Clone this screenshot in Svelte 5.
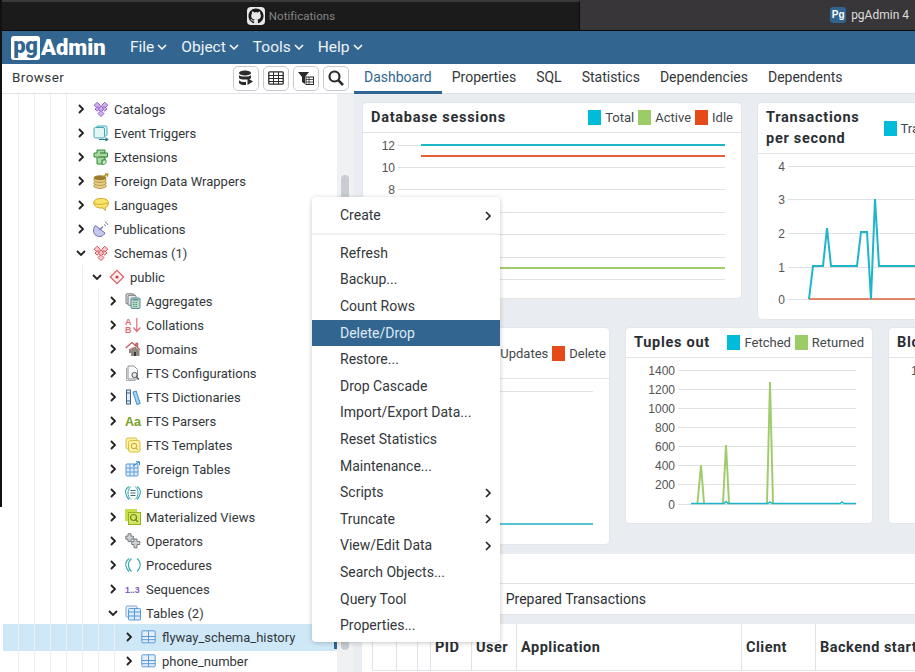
<script>
  const ICONS = {
    catalogs: `<g fill="#cdb0ec" stroke="#8b57c4" stroke-width=".9"><path d="M4.200 1.200l3 3-3 3-3-3z"/><path d="M11.800 1.200l3 3-3 3-3-3z"/><path d="M8 5l3 3-3 3-3-3z"/><path d="M8 9.600l3 3-3 3-3-3z"/><path d="M4.200 5.800l2.200 2.200-2.200 2.200L2 8z"/><path d="M11.800 5.800l2.200 2.200-2.200 2.200L9.600 8z"/></g>`,
    triggers: `<g fill="#e4f5f6" stroke="#3fa9b5" stroke-width="1"><rect x="3.500" y="1" width="10.500" height="10" rx="1.500"/><rect x="1" y="2.500" width="10.500" height="10.500" rx="1.500"/></g><path d="M6 14.500h8.500M12.500 12.700l2.300 1.800-2.300 1.500" fill="none" stroke="#2a7f8a" stroke-width="1.100"/>`,
    extensions: `<g stroke="#2f8a3a" stroke-width="1" fill="#a8d8a0"><path d="M4 1h8v3h2.500v4H12v3H9v4H4V8H1V4h3z"/></g><path d="M5 8h7M7 4h5" stroke="#1f6a2a" stroke-width="1"/><path d="M10 11h3v3l-2 1.500H9z" fill="#d8f0d0" stroke="#2f8a3a" stroke-width=".8"/>`,
    fdw: `<g fill="#e8cf84" stroke="#a48a3a" stroke-width=".8"><ellipse cx="7" cy="13" rx="6.300" ry="2.400"/><ellipse cx="7" cy="10" rx="6.300" ry="2.400"/></g><ellipse cx="7" cy="7" rx="6.300" ry="2.400" fill="#e8cf84" stroke="#a48a3a" stroke-width=".8"/><ellipse cx="7" cy="4.800" rx="6.300" ry="2.500" fill="#9a7c2a"/><path d="M9 4l5-2.500M12 .8l3 .2-1 2.800" fill="none" stroke="#b58e2a" stroke-width="1.200"/>`,
    languages: `<path d="M.8 5.500c0-2.500 3-4 7-4s7.500 1 7.500 4-1 4.500-3 5v3l-2.300-2.600C5 11.500.8 9.500.8 5.500z" fill="#fbe46b" stroke="#c9a722" stroke-width="1"/><path d="M1.200 6c2 1.800 10 2 14-.5" fill="none" stroke="#c9a722" stroke-width=".9"/>`,
    publications: `<path d="M2.500 4.500C-.5 8 0 12.500 3 14.500s7.500 1 9-2.500z" fill="#c6c8ea" stroke="#6d70b5" stroke-width="1"/><path d="M6.500 9l3.500-3.500" stroke="#6d70b5" stroke-width="1.300"/><path d="M11 3.500a2 2 0 0 1 1.500 1.500M12 1a5 5 0 0 1 3 3" fill="none" stroke="#6d70b5" stroke-width=".9"/>`,
    schemas: `<g fill="#f6c7c9" stroke="#cf4a50" stroke-width=".9"><path d="M4.200 1.200l3 3-3 3-3-3z"/><path d="M11.800 1.200l3 3-3 3-3-3z"/><path d="M8 5l3 3-3 3-3-3z"/><path d="M8 9.600l3 3-3 3-3-3z"/><path d="M4.200 5.800l2.200 2.200-2.200 2.200L2 8z"/><path d="M11.800 5.800l2.200 2.200-2.200 2.200L9.600 8z"/></g>`,
    public: `<path d="M8 1.300L14.700 8 8 14.700 1.300 8z" fill="#fdeeee" stroke="#d9575c" stroke-width="1.100"/><circle cx="8" cy="8" r="1.600" fill="#d33c43"/>`,
    aggregates: `<g fill="#e6e8ea" stroke="#666e76" stroke-width=".9"><rect x="1" y=".8" width="8" height="10" rx="1"/><rect x="3" y="2.300" width="8" height="10" rx="1"/></g><rect x="6" y="5" width="9" height="10.500" rx="1" fill="#b8dcc8" stroke="#4f7f8f" stroke-width=".9"/><path d="M7.500 6.800h6" stroke="#4f7f8f" stroke-width="1.200"/><path d="M8 9.500h1.500m1 0H12M8 11.500h1.500m1 0H12M8 13.500h1.500m1 0H12" stroke="#4f8f7f" stroke-width="1"/>`,
    collations: `<text x="0" y="7.500" font-family="Liberation Sans" font-weight="700" font-size="9" fill="#e26d78">A</text><text x="0" y="15.800" font-family="Liberation Sans" font-weight="700" font-size="9" fill="#e26d78">B</text><path d="M11.800 1v13M8.300 10.500l3.500 4 3.500-4" fill="none" stroke="#e26d78" stroke-width="1.200"/>`,
    domains: `<path d="M.7 7L7 1.500 11 5V2.500h1.500v4L15 9" fill="none" stroke="#c25a5a" stroke-width="1.300"/><path d="M4 8h3V12H4z" fill="#8a8077"/><path d="M7 7l3-1.500 4.500 4V15H6V9.500z" fill="#8f887f"/><path d="M9 11h2v4H9z" fill="#3a3a3a"/><path d="M5 7.500l2-1 1 .5-3 3z" fill="#d88"/>`,
    configs: `<path d="M3 1h6l3.500 3.500V14H3z" fill="#fff" stroke="#8a8f94" stroke-width="1"/><path d="M1.500 3v12.500h9" fill="none" stroke="#a8adb2" stroke-width="1"/><circle cx="9.500" cy="10" r="2.600" fill="#e8eaec" stroke="#4b5156" stroke-width="1"/><path d="M11.500 12l2.500 2.500" stroke="#4b5156" stroke-width="1.300"/>`,
    dicts: `<rect x="1.500" y="1" width="4" height="14" fill="#dfeefa" stroke="#3e5f80" stroke-width="1"/><path d="M1.500 4h4M1.500 12h4" stroke="#3e5f80"/><path d="M8 3l3.200-1 4 12.500-3.300 1z" fill="#a9d3f0" stroke="#3d8bc8" stroke-width="1"/>`,
    parsers: `<text x="0" y="12.500" font-family="Liberation Sans" font-weight="700" font-size="12.500" fill="#76a02a">Aa</text>`,
    templates: `<rect x="1" y="1" width="11" height="11" rx="2" fill="#fdf2a8" stroke="#d8c040" stroke-width="1"/><rect x="3.500" y="3.500" width="11.500" height="11.500" rx="2" fill="#fdf2a8" stroke="#d8c040" stroke-width="1"/><circle cx="9" cy="9" r="2.700" fill="none" stroke="#c9a830" stroke-width="1"/><path d="M11 11l2 2" stroke="#c9a830" stroke-width="1"/>`,
    foreign: `<rect x="1" y="3" width="12" height="12" rx="1" fill="#dcebfa" stroke="#5a9ad8" stroke-width="1"/><path d="M1 7h12M1 11h12M5 3v12M9 3v12" stroke="#5a9ad8" stroke-width=".9"/><path d="M8 5l6-4M11 .8h3.500V4" fill="none" stroke="#2f80c8" stroke-width="1"/>`,
    functions: `<path d="M4 1.500C1 3.500 0 6 .800 8.500 1 11 2.500 13 4 14.500M12 1.500c2.500 2 4 4.500 3.200 7-.3 2.500-1.700 4.500-3.200 6" fill="none" stroke="#35a7b3" stroke-width="1.100"/><path d="M6 1.500C3.500 3.500 3 6 3 8s.5 4.500 3 6.500M10 1.500c2.500 2 3 4.500 3 6.500s-.5 4.500-3 6.500" fill="none" stroke="#35a7b3" stroke-width="1"/><path d="M5.500 5.500h5M5.500 8h5M5.500 10.500h5" stroke="#3a6f7a" stroke-width="1"/>`,
    matviews: `<rect x="0" y="0" width="12" height="12" fill="#c8dc48"/><rect x="3.500" y="3.500" width="12" height="12" fill="#d4e468" stroke="#9ab020" stroke-width="1"/><circle cx="8.500" cy="8.500" r="3" fill="none" stroke="#6f8a10" stroke-width="1.200"/><path d="M10.500 10.500l2.500 2.500" stroke="#6f8a10" stroke-width="1.200"/>`,
    operators: `<g fill="#cfd2d6" stroke="#6a6f75" stroke-width=".9"><path d="M3 .8h3v2.400h2.400v3H6v2.400H3V6.200H.8v-3H3z"/><path d="M9 6h3v2.500h2.800v3H12v3.300H9v-3.300H6.700v-3H9z"/></g>`,
    procedures: `<path d="M4 1.500C1.500 3.500.500 6 .800 8.500 1 11 2.500 13 4 14.500M6.500 1.500C4 3.500 3.500 6 3.500 8s.5 4.500 3 6.500" fill="none" stroke="#35a7b3" stroke-width="1.100"/><path d="M12 1.500c2.500 2 3.500 4.500 3.200 7-.2 2.500-1.700 4.500-3.200 6" fill="none" stroke="#35a7b3" stroke-width="1.100"/>`,
    sequences: `<text x="0" y="12" font-family="Liberation Sans" font-weight="700" font-size="8.800" fill="#7e57c2">1..3</text>`,
    tables: `<rect x="1" y="1" width="11" height="11" rx="1" fill="#eaf2fb" stroke="#7aa7d8" stroke-width="1"/><rect x="3.500" y="3.500" width="12" height="11.500" rx="1" fill="#dcebfa" stroke="#5a9ad8" stroke-width="1"/><path d="M3.500 7h12M3.500 11h12M9.500 3.500V15" stroke="#5a9ad8" stroke-width="1"/>`,
    table: `<rect x=".8" y="1.800" width="13.400" height="12" rx="1" fill="#e4effb" stroke="#5a9ad8" stroke-width="1"/><path d="M.8 7.500h13.400M.8 10.700h13.400M7.500 1.800v12" stroke="#5a9ad8" stroke-width="1"/>`
  };

  const rows = [
    { l: 0, o: false, i: 'catalogs', t: 'Catalogs' },
    { l: 0, o: false, i: 'triggers', t: 'Event Triggers' },
    { l: 0, o: false, i: 'extensions', t: 'Extensions' },
    { l: 0, o: false, i: 'fdw', t: 'Foreign Data Wrappers' },
    { l: 0, o: false, i: 'languages', t: 'Languages' },
    { l: 0, o: false, i: 'publications', t: 'Publications' },
    { l: 0, o: true, i: 'schemas', t: 'Schemas (1)' },
    { l: 1, o: true, i: 'public', t: 'public' },
    { l: 2, o: false, i: 'aggregates', t: 'Aggregates' },
    { l: 2, o: false, i: 'collations', t: 'Collations' },
    { l: 2, o: false, i: 'domains', t: 'Domains' },
    { l: 2, o: false, i: 'configs', t: 'FTS Configurations' },
    { l: 2, o: false, i: 'dicts', t: 'FTS Dictionaries' },
    { l: 2, o: false, i: 'parsers', t: 'FTS Parsers' },
    { l: 2, o: false, i: 'templates', t: 'FTS Templates' },
    { l: 2, o: false, i: 'foreign', t: 'Foreign Tables' },
    { l: 2, o: false, i: 'functions', t: 'Functions' },
    { l: 2, o: false, i: 'matviews', t: 'Materialized Views' },
    { l: 2, o: false, i: 'operators', t: 'Operators' },
    { l: 2, o: false, i: 'procedures', t: 'Procedures' },
    { l: 2, o: false, i: 'sequences', t: 'Sequences' },
    { l: 2, o: true, i: 'tables', t: 'Tables (2)' },
    { l: 3, o: false, i: 'table', t: 'flyway_schema_history', sel: true },
    { l: 3, o: false, i: 'table', t: 'phone_number' }
  ];

  const menuTop = [{ t: 'Create', sub: true }];
  const menuItems = [
    { t: 'Refresh' }, { t: 'Backup...' }, { t: 'Count Rows' }, { t: 'Delete/Drop', active: true },
    { t: 'Restore...' }, { t: 'Drop Cascade' }, { t: 'Import/Export Data...' }, { t: 'Reset Statistics' },
    { t: 'Maintenance...' }, { t: 'Scripts', sub: true }, { t: 'Truncate', sub: true }, { t: 'View/Edit Data', sub: true },
    { t: 'Search Objects...' }, { t: 'Query Tool' }, { t: 'Properties...' }
  ];

  const nav = ['File', 'Object', 'Tools', 'Help'];
  const tabs = ['Dashboard', 'Properties', 'SQL', 'Statistics', 'Dependencies', 'Dependents'];

  const dbGrid = [[12, 12], [34, 10], [56, 8], [79, 6], [101, 4], [124, 2], [146, 0]];
  const tpsGrid = [[12, 4], [45, 3], [79, 2], [113, 1], [145, 0]];
  const outGrid = [[12, 1400], [31, 1200], [50, 1000], [69, 800], [88, 600], [107, 400], [126, 200], [146, 0]];
  const tpsLine = '51,145 55,112 65,112 69,74 73,112 99,112 103,78 109,78 113,145 117,45 121,112 157,112';
  const spikes = ['71.500,145 75,107 78,145', '97,145 100,87 103,145', '141,145 144,24 147,145'];
</script>

<div class="app">
  <header class="titlebar">
    <div class="ttab dark">
      <svg class="gh" viewBox="0 0 18 18"><rect width="18" height="18" rx="4" fill="#e8e8e8"/><path transform="translate(1.500 1.500) scale(.94)" fill="#1a1a1a" d="M8 0C3.580 0 0 3.580 0 8c0 3.540 2.290 6.530 5.470 7.590.4.070.55-.17.550-.38 0-.19-.01-.82-.01-1.490-2.010.37-2.530-.49-2.690-.94-.09-.23-.48-.94-.82-1.130-.28-.15-.68-.52-.01-.53.630-.01 1.080.58 1.230.82.720 1.210 1.870.87 2.330.66.070-.52.280-.87.510-1.070-1.780-.2-3.640-.89-3.640-3.950 0-.87.310-1.590.82-2.150-.08-.2-.36-1.020.08-2.120 0 0 .67-.21 2.200.82.640-.18 1.320-.27 2-.27s1.360.09 2 .27c1.530-1.040 2.200-.82 2.200-.82.440 1.100.16 1.920.08 2.120.51.560.82 1.270.82 2.150 0 3.070-1.870 3.750-3.650 3.950.29.250.54.730.54 1.480 0 1.070-.01 1.930-.01 2.200 0 .21.150.46.550.38A8.010 8.010 0 0 0 16 8c0-4.420-3.580-8-8-8z"/></svg>
      <span class="ttext">Notifications</span>
    </div>
    <div class="ttab light">
      <span class="pgmini">Pg</span>
      <span class="ttext bright">pgAdmin 4</span>
    </div>
  </header>

  <nav class="navbar">
    <div class="logo"><span class="pg">pg</span><span class="admin">Admin</span></div>
    <ul class="menu-list">
      {#each nav as n}
        <li>{n}<svg class="caret" viewBox="0 0 10 6"><path d="M1 1l4 4 4-4" fill="none" stroke="#fff" stroke-width="1.500"/></svg></li>
      {/each}
    </ul>
  </nav>

  <div class="body">
    <aside class="browser">
      <div class="bhead">
        <span class="btitle">Browser</span>
        <div class="tools">
          <button aria-label="Query tool"><svg viewBox="0 0 16 16"><ellipse cx="7" cy="3" rx="6" ry="2.500" fill="#2b2b2b"/><path d="M1 5c1 2 11 2 12 0v3c-1 2-11 2-12 0zM1 10c1 2 5 2.300 7 2v3c-3 .4-6-.3-7-2z" fill="#2b2b2b"/><path d="M9.500 8v7l5.500-3.500z" fill="#2b2b2b"/></svg></button>
          <button aria-label="View data"><svg viewBox="0 0 16 16"><rect x=".8" y="1.800" width="14.400" height="12.400" rx="1" fill="none" stroke="#2b2b2b" stroke-width="1.300"/><path d="M.8 5.500h14.400M.8 8.500h14.400M.8 11.500h14.400M5.500 2v12M10.500 2v12" stroke="#2b2b2b" stroke-width="1"/></svg></button>
          <button aria-label="Filtered rows"><svg viewBox="0 0 16 16"><path d="M0 2h11L7 7v7l-3-2V7z" fill="#2b2b2b"/><rect x="8" y="7" width="7.500" height="7.500" fill="#fff" stroke="#2b2b2b"/><path d="M8 9.500h7.500M8 12h7.500M11 7v7.500" stroke="#2b2b2b" stroke-width=".8"/></svg></button>
          <button aria-label="Search"><svg viewBox="0 0 16 16"><circle cx="6.500" cy="6.500" r="5" fill="none" stroke="#2b2b2b" stroke-width="2.200"/><path d="M10.200 10.200l4.800 4.800" stroke="#2b2b2b" stroke-width="2.600"/></svg></button>
        </div>
      </div>
      <div class="treewrap">
        <div class="tree">
          <div class="spacer"></div>
          {#each rows as r}
            <div class="row" class:sel={r.sel}>
              <span class="indent l{r.l}"></span>
              <span class="chev">
                {#if r.o}
                  <svg width="10" height="8" viewBox="0 0 10 8"><path d="M1 2l4 4 4-4" fill="none" stroke="#222" stroke-width="1.800"/></svg>
                {:else}
                  <svg width="8" height="10" viewBox="0 0 8 10"><path d="M2 1l4 4-4 4" fill="none" stroke="#222" stroke-width="1.800"/></svg>
                {/if}
              </span>
              <svg class="ico" viewBox="0 0 16 16">{@html ICONS[r.i]}</svg>
              <span class="label">{r.t}</span>
            </div>
          {/each}
        </div>
        <div class="gutter"><div class="thumb"></div></div>
      </div>
    </aside>

    <main class="right">
      <div class="tabs">
        {#each tabs as t, i}
          <span class="tab" class:active={i === 0}>{t}</span>
        {/each}
      </div>

      <div class="content">
        <div class="cards">
          <section class="card db">
            <div class="chead">
              <h3>Database sessions</h3>
              <div class="legend">
                <i class="cy"></i><span>Total</span><i class="gr"></i><span>Active</span><i class="or"></i><span>Idle</span>
              </div>
            </div>
            <svg class="chart" width="378" height="165">
              {#each dbGrid as [y, v]}
                <line class="grid" x1="35" x2="362" y1={y + .5} y2={y + .5} />
                <text class="ax" x="32" y={y + 4.500} text-anchor="end">{v}</text>
              {/each}
              <line class="lcy" x1="58" x2="362" y1="12" y2="12" />
              <line class="lor" x1="58" x2="362" y1="23" y2="23" />
              <line class="lgr" x1="58" x2="362" y1="135" y2="135" />
            </svg>
          </section>

          <section class="card tps">
            <div class="chead tall">
              <h3>Transactions<br />per second</h3>
              <div class="legend push">
                <i class="cy"></i><span>Transactions</span><i class="gr"></i><span>Commits</span>
              </div>
            </div>
            <svg class="chart" width="380" height="165">
              {#each tpsGrid as [y, v]}
                <line class="grid" x1="30" x2="380" y1={y + .5} y2={y + .5} />
                <text class="ax" x="27" y={y + 4.500} text-anchor="end">{v}</text>
              {/each}
              <line class="lor thin" x1="51" x2="380" y1="145" y2="145" />
              <polyline class="lcy" points={tpsLine} />
            </svg>
          </section>
        </div>

        <div class="cards second">
          <section class="card tin">
            <div class="chead tall">
              <h3>Tuples<br />in</h3>
              <div class="legend low">
                <i class="cy"></i><span>Inserts</span><i class="gr"></i><span>Updates</span><i class="or"></i><span>Delete</span>
              </div>
            </div>
            <svg class="chart" width="247" height="165">
              <line class="grid" x1="60" x2="231" y1="12.500" y2="12.500" />
              <line class="lcy thin" x1="70" x2="231" y1="145" y2="145" />
            </svg>
          </section>

          <section class="card tout">
            <div class="chead">
              <h3>Tuples out</h3>
              <div class="legend">
                <i class="cy"></i><span>Fetched</span><i class="gr"></i><span>Returned</span>
              </div>
            </div>
            <svg class="chart" width="246" height="165">
              {#each outGrid as [y, v]}
                <line class="grid" x1="52" x2="230" y1={y + .5} y2={y + .5} />
                <text class="ax" x="49" y={y + 4.500} text-anchor="end">{v}</text>
              {/each}
              {#each spikes as s}
                <polyline class="lgr" points={s} />
              {/each}
              <polyline class="lcy thin" points="65,145.500 98,145.500 100,143.500 102,145.500 142,145.500 144,144 146,145.500 214,145.500 216,144 218,145.500 230,145.500" />
            </svg>
          </section>

          <section class="card blk">
            <div class="chead">
              <h3>Block I/O</h3>
            </div>
            <svg class="chart" width="246" height="165">
              <text class="ax" x="22" y="16.500">1</text>
            </svg>
          </section>
        </div>

        <section class="activity">
          <div class="ahead">Server activity</div>
          <div class="atabs"><span>Sessions</span><span>Locks</span><span>Prepared Transactions</span></div>
          <div class="agap"></div>
          <div class="atable">
            <span></span><span></span><span></span>
            <span>PID</span><span>User</span><span>Application</span><span>Client</span><span>Backend start</span>
          </div>
        </section>
      </div>
    </main>
  </div>

  <div class="edge"></div>

  <div class="ctx">
    {#each menuTop as m}
      <div class="mi">{m.t}<svg class="subc" width="8" height="10" viewBox="0 0 8 10"><path d="M2 1l4 4-4 4" fill="none" stroke="#222" stroke-width="1.600"/></svg></div>
    {/each}
    <div class="sep"></div>
    {#each menuItems as m}
      <div class="mi" class:on={m.active}>{m.t}{#if m.sub}<svg class="subc" width="8" height="10" viewBox="0 0 8 10"><path d="M2 1l4 4-4 4" fill="none" stroke="#222" stroke-width="1.600"/></svg>{/if}</div>
    {/each}
  </div>
</div>

<style>
  :global(body) { margin: 0; background: #fff; }
  .app {
    position: relative;
    width: 915px;
    height: 672px;
    overflow: hidden;
    display: flex;
    flex-direction: column;
    font-family: Roboto, "Liberation Sans", sans-serif;
    color: #2b2f33;
    background: #fff;
  }
  .titlebar {
    flex: none;
    height: 31px;
    display: flex;
    background: #383638;
    border-bottom: 1px solid #0a0a0a;
    box-sizing: border-box;
  }
  .ttab { display: flex; align-items: center; box-sizing: border-box; }
  .ttab.dark {
    width: 580px;
    justify-content: center;
    background: #1c1b1c;
    border-top: 2px solid #3a3a3a;
    border-right: 1px solid #0c0c0c;
    gap: 4px;
    padding-left: 3px;
  }
  .ttab.light { flex: 1; justify-content: flex-end; padding-right: 6px; gap: 5px; }
  .gh { width: 18px; height: 18px; }
  .ttext { font-size: 11.500px; color: #858585; letter-spacing: .05px; }
  .ttext.bright { color: #dedede; font-size: 12px; letter-spacing: 0; }
  .pgmini {
    width: 16px; height: 16px; border-radius: 3px; background: #2f6590; color: #fff;
    font: 700 10px/16px "Liberation Sans", sans-serif; text-align: center;
  }

  .navbar {
    flex: none;
    height: 33px;
    background: #326690;
    display: flex;
    align-items: center;
    color: #fff;
    padding-left: 11px;
  }
  .logo { display: flex; align-items: center; width: 119px; }
  .pg {
    width: 29px; height: 24px; background: #fff; color: #326690; border-radius: 3px;
    font: 900 22px/19px Roboto, sans-serif; text-align: center; letter-spacing: -.3px;
  }
  .admin { font: 900 22px/24px Roboto, sans-serif; color: #fff; letter-spacing: 0; margin-left: 1px; }
  .menu-list { display: flex; list-style: none; margin: -2px 0 0; padding: 0; gap: 14px; font-size: 15.500px; letter-spacing: 0; }
  .menu-list li { display: flex; align-items: center; gap: 3px; color: #eef3f7; }
  .caret { width: 10px; height: 6px; }

  .body { flex: 1; display: flex; min-height: 0; }
  .browser { flex: none; width: 354px; display: flex; flex-direction: column; }
  .bhead {
    flex: none; height: 30px; box-sizing: border-box; border-bottom: 1px solid #dfe3e7;
    display: flex; align-items: center; padding: 0 5px 0 12px;
  }
  .btitle { font-size: 13.500px; letter-spacing: .4px; color: #33373b; margin-bottom: 4px; }
  .tools { margin-left: auto; display: flex; gap: 4px; margin-top: -1px; }
  .tools button {
    width: 26px; height: 25px; padding: 0; box-sizing: border-box; background: #fff;
    border: 1px solid #c6cacf; border-radius: 5px; display: flex; align-items: center; justify-content: center;
  }
  .tools svg { width: 16px; height: 16px; }

  .treewrap { flex: 1; display: flex; min-height: 0; }
  .tree { width: 337px; flex: none; padding-left: 3px; box-sizing: border-box; overflow: hidden; }
  .spacer { height: 3px; width: 64px; background-image: linear-gradient(90deg, transparent 15px, #eceef0 15px, #eceef0 16px); background-size: 16px 100%; }
  .row { height: 24px; display: flex; align-items: center; font-size: 13px; letter-spacing: 0; color: #33373b; }
  .row.sel {
    background: #cfe8f8;
    box-shadow: 0 2px 0 #cfe8f8, 0 -1px 0 #cfe8f8;
    border-right: 3px solid #2f6590;
  }
  .indent {
    flex: none; align-self: stretch;
    background-image: linear-gradient(90deg, transparent 15px, #eceef0 15px, #eceef0 16px);
    background-size: 16px 100%;
  }
  .l0 { width: 64px; }
  .l1 { width: 80px; }
  .l2 { width: 96px; }
  .l3 { width: 112px; }
  .chev { flex: none; width: 26px; box-sizing: border-box; padding-left: 2px; display: flex; justify-content: center; align-items: center; }
  .ico { flex: none; width: 16px; height: 16px; margin-right: 5px; overflow: visible; }
  .label { white-space: nowrap; }
  .gutter { flex: 1; background: #eff1f3; padding: 81px 0 0 4px; }
  .thumb { width: 8px; height: 475px; border-radius: 4px; background: #c9cdd1; }

  .right { flex: 1; min-width: 0; display: flex; flex-direction: column; }
  .tabs {
    flex: none; height: 30px; box-sizing: border-box; display: flex; align-items: stretch;
    border-bottom: 1px solid #dfe3e7; font-size: 14px; letter-spacing: 0;
  }
  .tab { padding: 0 10px; line-height: 26px; color: #33373b; white-space: nowrap; box-sizing: border-box; }
  .tab.active { color: #2f6590; border-bottom: 3px solid #2f6590; height: 30px; }
  .content { flex: 1; min-height: 0; overflow: hidden; background: #e9edf1; padding: 9px 0 0 8px; }
  .cards { display: flex; gap: 17px; height: 216px; align-items: flex-start; }
  .second { margin-top: 9px; }
  .card { flex: none; background: #fff; border-radius: 4px; box-shadow: 0 0 0 1px #e3e6ea; overflow: hidden; }
  .db { width: 378px; height: 195px; margin-left: 1px; }
  .tps { width: 380px; height: 216px; }
  .tin { width: 247px; height: 216px; }
  .tout { width: 246px; height: 195px; }
  .blk { width: 246px; height: 195px; }
  .chead {
    height: 30px; box-sizing: border-box; border-bottom: 1px solid #dfe3e7;
    display: flex; align-items: center; padding: 0 8px; white-space: nowrap;
  }
  .chead.tall { height: 51px; }
  h3 { margin: 0; font-size: 14.500px; font-weight: 700; letter-spacing: .73px; line-height: 21px; color: #2b2f33; }
  .legend { margin-left: auto; display: flex; align-items: center; font-size: 13px; letter-spacing: 0; color: #44484c; }
  .legend.push { margin-left: 20px; }
  .legend.low { margin-right: -4px; }
  .legend i { width: 13px; height: 15px; margin: 0 4px; display: block; }
  .cy { background: #00bcd9; }
  .gr { background: #9ccc65; }
  .or { background: #e64a19; }
  .chart { display: block; }
  .grid { stroke: #dfe2e5; stroke-width: 1; }
  .ax { font: 12px "Liberation Sans", sans-serif; fill: #545454; }
  .lcy, .lor, .lgr { fill: none; stroke-width: 2; }
  .lcy { stroke: #1fb5c9; }
  .lor { stroke: #e2613a; }
  .lgr { stroke: #a1cc6e; }
  .thin { stroke-width: 1.500; }

  .activity { margin-top: 10px; background: #fff; height: 118px; width: 600px; }
  .ahead { height: 29px; border-bottom: 1px solid #dfe3e7; font-size: 14px; line-height: 29px; padding-left: 12px; }
  .atabs {
    height: 31px; box-sizing: border-box; padding: 0 0 0 12px; display: flex; align-items: center; gap: 19px;
    border-bottom: 1px solid #dfe3e7; font-size: 14px; letter-spacing: 0; white-space: nowrap;
  }
  .agap { height: 9px; background: #e9edf1; }
  .atable {
    margin-left: 10px; height: 47px; box-sizing: border-box; border-bottom: 1px solid #dfe3e7; background: #fff;
    display: grid; grid-template-columns: 24px 21px 13px 41px 45px 225px 74px 1fr;
    font-size: 14.500px; font-weight: 700; letter-spacing: .5px; color: #2b2f33;
  }
  .atable span { border-left: 1px solid #dfe3e7; padding: 1px 0 0 4px; line-height: 46px; white-space: nowrap; box-sizing: border-box; }

  .edge { position: absolute; left: 0; top: 0; width: 2px; height: 507px; background: #111; }
  .ctx {
    position: absolute; left: 312px; top: 197px; width: 188px; height: 445px; box-sizing: border-box;
    background: #fff; border-radius: 4px; padding: 5px 0 0; box-shadow: 0 1px 5px rgba(0, 0, 0, .22);
    font-size: 14px; letter-spacing: 0; color: #33373b;
  }
  .mi { height: 26.600px; line-height: 26.600px; padding-left: 28px; position: relative; white-space: nowrap; }
  .mi.on { background: #326690; color: #dfeaf4; }
  .sep { height: 2px; background: #eef0f2; margin: 4px 0 5.300px; }
  .subc { position: absolute; right: 8px; top: 8.500px; }
</style>
